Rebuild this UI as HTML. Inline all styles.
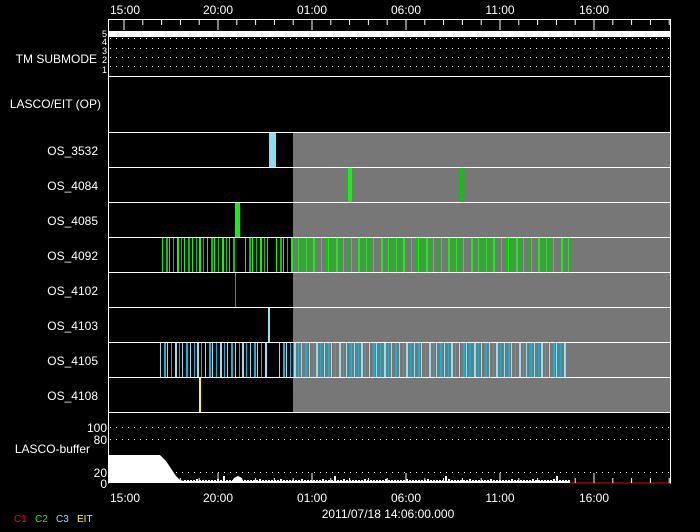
<!DOCTYPE html>
<html><head><meta charset="utf-8"><style>
html,body{margin:0;padding:0;background:#000;}
svg{display:block}
text{font-family:"Liberation Sans",sans-serif;font-size:12px;fill:#fff}
</style></head><body>
<svg id="s" width="700" height="532" xmlns="http://www.w3.org/2000/svg">
<rect width="700" height="532" fill="#000"/>
<rect x="293" y="132" width="377" height="280" fill="#777"/>
<g id="bars"></g>
<rect x="108" y="31" width="562" height="6" fill="#fff"/>
<g stroke="#fff" stroke-width="1" stroke-dasharray="1,5" fill="none">
<line x1="110" y1="38.5" x2="670" y2="38.5"/>
<line x1="110" y1="48.5" x2="670" y2="48.5"/>
<line x1="110" y1="57.5" x2="670" y2="57.5"/>
<line x1="110" y1="66.5" x2="670" y2="66.5"/>
<line x1="110" y1="427.5" x2="670" y2="427.5"/>
<line x1="110" y1="439.5" x2="670" y2="439.5"/>
<line x1="110" y1="472.5" x2="670" y2="472.5"/>
</g>
<polygon fill="#fff" points="108,483 108,455 160,455 162,457 164,459 166,461 168,464 170,467 172,470 174,473 176,476 178,478 180,480 184,481 232,481 234,478 238,476 242,478 243,481 570,481 570,483"/>
<g id="noise" fill="#fff"></g>
<line x1="570" y1="483" x2="670" y2="483" stroke="#e00" stroke-width="1"/>
<g stroke="#fff" stroke-width="1" fill="none">
<line x1="108.5" y1="19.5" x2="108.5" y2="483.5"/>
<line x1="670.5" y1="19.5" x2="670.5" y2="483.5"/>
<line x1="108" y1="19.5" x2="671" y2="19.5"/>
<line x1="108" y1="76.5" x2="671" y2="76.5"/>
<line x1="108" y1="132.5" x2="671" y2="132.5"/>
<line x1="108" y1="167.5" x2="671" y2="167.5"/>
<line x1="108" y1="202.5" x2="671" y2="202.5"/>
<line x1="108" y1="237.5" x2="671" y2="237.5"/>
<line x1="108" y1="272.5" x2="671" y2="272.5"/>
<line x1="108" y1="307.5" x2="671" y2="307.5"/>
<line x1="108" y1="342.5" x2="671" y2="342.5"/>
<line x1="108" y1="377.5" x2="671" y2="377.5"/>
<line x1="108" y1="412.5" x2="671" y2="412.5"/>
</g>
<g id="ticks" stroke="#fff" stroke-width="1"></g>
<g text-anchor="middle">
<text x="125" y="14">15:00</text><text x="218" y="14">20:00</text><text x="312" y="14">01:00</text>
<text x="406" y="14">06:00</text><text x="500" y="14">11:00</text><text x="594" y="14">16:00</text>
<text x="125" y="502">15:00</text><text x="218" y="502">20:00</text><text x="312" y="502">01:00</text>
<text x="406" y="502">06:00</text><text x="500" y="502">11:00</text><text x="594" y="502">16:00</text>
<text x="388" y="518">2011/07/18 14:06:00.000</text>
</g>
<g text-anchor="end">
<text x="97" y="63">TM SUBMODE</text>
<text x="101" y="108">LASCO/EIT (OP)</text>
<text x="98" y="155">OS_3532</text>
<text x="98" y="190">OS_4084</text>
<text x="98" y="225">OS_4085</text>
<text x="98" y="260">OS_4092</text>
<text x="98" y="295">OS_4102</text>
<text x="98" y="330">OS_4103</text>
<text x="98" y="365">OS_4105</text>
<text x="98" y="400">OS_4108</text>
<text x="90" y="453">LASCO-buffer</text>
<text x="107" y="432">100</text><text x="107" y="444">80</text>
<text x="107" y="477">20</text><text x="107" y="488">0</text>
<text x="107" y="37" style="font-size:9px">5</text>
<text x="107" y="45" style="font-size:9px">4</text>
<text x="107" y="54" style="font-size:9px">3</text>
<text x="107" y="63" style="font-size:9px">2</text>
<text x="107" y="73" style="font-size:9px">1</text>
</g>
<text x="14" y="522" style="font-size:10px;fill:#f00">C1</text>
<text x="35" y="522" style="font-size:10px;fill:#0f0">C2</text>
<text x="56" y="522" style="font-size:10px;fill:#9df">C3</text>
<text x="77" y="522" style="font-size:10px;fill:#ff0">EIT</text>
</svg>
<script>
var NS="http://www.w3.org/2000/svg";
function r(g,x,y,w,h,c){var e=document.createElementNS(NS,"rect");e.setAttribute("x",x);e.setAttribute("y",y);e.setAttribute("width",w);e.setAttribute("height",h);e.setAttribute("fill",c);g.appendChild(e);}
var b=document.getElementById("bars");
r(b,269,133,7,34,"#8de");
r(b,348,168,4,34,"#0f0");r(b,460,168,3,34,"#0c0");
r(b,235,203,5,34,"#0f0");
r(b,235,273,1,34,"#0c0");
r(b,268,308,2,34,"#9de");
r(b,199,378,2,34,"#ff0");
function row(y,ranges,c1,c2){ranges.forEach(function(rg){var x=rg[0],i=0;while(x<rg[1]){var w=(i%3==1)?2:1;r(b,x,y,w,34,(i%2==0)?c1:c2);x+=(i%4==3)?4:(i%2?3:4);i++;}});}
row(238,[[162,234],[245,269],[276,570]],"#0f0","#0c0");
row(343,[[160,267],[279,566]],"#9de","#0bd");
var n=document.getElementById("noise");
for(var x=184;x<570;x+=3){var h=(x%7==0)?2:1;if(x%37==1)h=5;r(n,x,481-h,2,h,"#fff");}
var t=document.getElementById("ticks");
for(var i=0;i<30;i++){var x=124+i*18.8;if(x>670)break;var maj=(i%5==0);
var l=document.createElementNS(NS,"line");l.setAttribute("x1",x);l.setAttribute("x2",x);l.setAttribute("y1",20);l.setAttribute("y2",maj?30:25);t.appendChild(l);
var m=document.createElementNS(NS,"line");m.setAttribute("x1",x);m.setAttribute("x2",x);m.setAttribute("y1",maj?473:478);m.setAttribute("y2",483);t.appendChild(m);}
</script>
</body></html>
